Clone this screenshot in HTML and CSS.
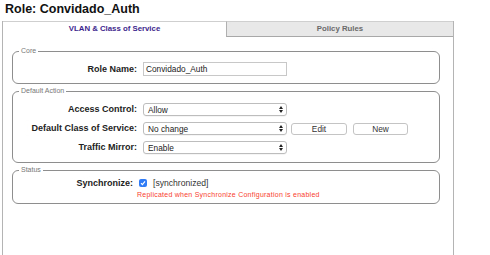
FILE: index.html
```html
<!DOCTYPE html>
<html>
<head>
<meta charset="utf-8">
<link rel="stylesheet" href="styles.css">
</head>
<body>
<h1 class="title">Role: Convidado_Auth</h1>
<div class="panel">
  <div class="tabs">
    <div class="tab active">VLAN &amp; Class of Service</div>
    <div class="tab inactive">Policy Rules</div>
  </div>
  <div class="content">
    <fieldset class="group core">
      <legend>Core</legend>
      <div class="rows">
        <label class="lbl">Role Name:</label>
        <div class="cell"><div class="input">Convidado_Auth</div></div>
      </div>
    </fieldset>
    <fieldset class="group action">
      <legend>Default Action</legend>
      <div class="rows">
        <label class="lbl">Access Control:</label>
        <div class="cell">
          <div class="select"><span>Allow</span><svg class="arr" width="4" height="7" viewBox="0 0 4 7"><path d="M0 3 L2 0 L4 3 Z M0 4 L2 7 L4 4 Z"/></svg></div>
        </div>
        <label class="lbl">Default Class of Service:</label>
        <div class="cell">
          <div class="select"><span>No change</span><svg class="arr" width="4" height="7" viewBox="0 0 4 7"><path d="M0 3 L2 0 L4 3 Z M0 4 L2 7 L4 4 Z"/></svg></div>
          <div class="btn edit">Edit</div>
          <div class="btn new">New</div>
        </div>
        <label class="lbl">Traffic Mirror:</label>
        <div class="cell">
          <div class="select"><span>Enable</span><svg class="arr" width="4" height="7" viewBox="0 0 4 7"><path d="M0 3 L2 0 L4 3 Z M0 4 L2 7 L4 4 Z"/></svg></div>
        </div>
      </div>
    </fieldset>
    <fieldset class="group status">
      <legend>Status</legend>
      <div class="srows">
        <label class="lbl sync">Synchronize:</label>
        <div class="cell">
          <span class="check"><svg width="8" height="8" viewBox="0 0 8 8"><path d="M2 4.2 L3.4 5.6 L6 2.4" fill="none" stroke="#fff" stroke-width="1.2"/></svg></span>
          <span class="syncval">[synchronized]</span>
        </div>
        <div></div>
        <div class="note">Replicated when Synchronize Configuration is enabled</div>
      </div>
    </fieldset>
  </div>
</div>
</body>
</html>
```
FILE: styles.css
```css
* { box-sizing: border-box; }
body {
  margin: 0;
  font-family: "Liberation Sans", Arial, sans-serif;
  color: #222;
  background: #fff;
}
.title {
  margin: 2px 0 4px 5px;
  font-size: 12.5px;
  line-height: 15px;
  font-weight: bold;
  color: #111;
}
.panel {
  margin-left: 2px;
  width: 452px;
  min-height: 234px;
  border-left: 1px solid #b4b4b4;
  border-right: 1px solid #b4b4b4;
}
.tabs {
  display: grid;
  grid-template-columns: 223px 1fr;
  height: 16px;
}
.tab {
  font-size: 7.8px;
  font-weight: bold;
  text-align: center;
  line-height: 14px;
  border-top: 1px solid #cfcfcf;
}
.tab.active { color: #3d1f8c; background: #fff; }
.tab.inactive {
  color: #6a6a6a;
  background: #e8e8e8;
  border-left: 1px solid #b0b0b0;
  border-bottom: 1px solid #a8a8a8;
}
.content {
  padding: 10px 13px 0 9px;
  display: flex;
  flex-direction: column;
  gap: 3px;
}
fieldset.group {
  margin: 0;
  border: 1px solid #8e8e8e;
  border-radius: 6px;
  padding: 7px 0;
  min-width: 0;
}
fieldset.action { padding: 8px 0; }
fieldset.status { padding: 3px 0 3px; }
legend {
  font-size: 7px;
  line-height: 8px;
  color: #777;
  padding: 0 2px;
  margin-left: 6px;
}
.rows {
  display: grid;
  grid-template-columns: 124px auto;
  column-gap: 6px;
  row-gap: 6px;
  align-items: center;
}
.lbl {
  text-align: right;
  font-size: 9px;
  font-weight: bold;
  line-height: 13px;
  color: #222;
}
.cell { display: flex; align-items: center; }
.input {
  width: 144px;
  height: 14px;
  border: 1px solid #c8c8c8;
  padding-left: 2px;
  font-size: 8.3px;
  line-height: 12px;
  color: #222;
}
.select {
  width: 144px;
  height: 13px;
  border: 1px solid #bdbdbd;
  border-radius: 3px;
  display: flex;
  align-items: center;
  justify-content: space-between;
  padding: 0 3px 0 4px;
  font-size: 8.3px;
  color: #222;
  box-shadow: 0 0.5px 0.5px rgba(0,0,0,0.08);
}
.arr path { fill: #222; }
.btn {
  height: 12px;
  border: 1px solid #c4c4c4;
  border-radius: 3px;
  font-size: 8.3px;
  line-height: 10px;
  text-align: center;
  background: #fff;
  color: #333;
}
.edit { width: 56px; margin-left: 4px; }
.new { width: 55px; margin-left: 6px; }
.srows {
  display: grid;
  grid-template-columns: 120px 1fr;
  column-gap: 4px;
  grid-template-rows: 12px 11px;
  align-items: center;
}
.check {
  width: 8px;
  height: 8px;
  margin-left: 2px;
  border-radius: 2px;
  background: #2f7cf6;
  display: flex;
}
.syncval {
  margin-left: 6px;
  font-size: 8.6px;
  color: #333;
}
.note {
  font-size: 7px;
  letter-spacing: 0.25px;
  color: #f8402f;
  line-height: 11px;
}
```
